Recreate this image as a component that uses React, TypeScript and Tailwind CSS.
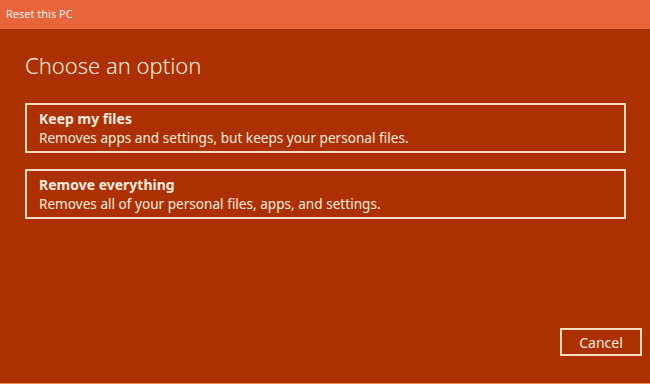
const options = [
  { title: "Keep my files", desc: "Removes apps and settings, but keeps your personal files." },
  { title: "Remove everything", desc: "Removes all of your personal files, apps, and settings." },
]

export default function App() {
  return (
    <div
      className="flex h-[384px] w-[650px] flex-col bg-[#ad3100] text-[#fcece0]"
      style={{ fontFamily: '"Segoe UI", "Noto Sans", sans-serif' }}
    >
      <div className="flex h-[29px] items-center bg-[#e8643a] pl-[6px] text-[11px] text-[#fff4ec]">
        Reset this PC
      </div>

      <div className="flex flex-1 flex-col border-b border-[#f08a5d] pl-[25px] pr-[24px]">
        <h1 className="mt-[21px] text-[22px] leading-[30px] font-light">Choose an option</h1>

        <div className="mt-[23px] flex flex-col gap-[16px]">
          {options.map((option) => (
            <button
              key={option.title}
              className="flex h-[50px] flex-col justify-center border-2 border-[#f8dcc4] pl-[12px] text-left"
            >
              <span className="text-[14px] leading-[19px] font-bold">{option.title}</span>
              <span className="text-[13.6px] leading-[19px]">{option.desc}</span>
            </button>
          ))}
        </div>

        <div className="mt-auto mb-[27px] flex justify-end">
          <button className="-mr-[16px] h-[28px] w-[82px] border-2 border-[#f8dcc4] pt-[2px] text-[14px] leading-none">
            Cancel
          </button>
        </div>
      </div>
    </div>
  )
}
